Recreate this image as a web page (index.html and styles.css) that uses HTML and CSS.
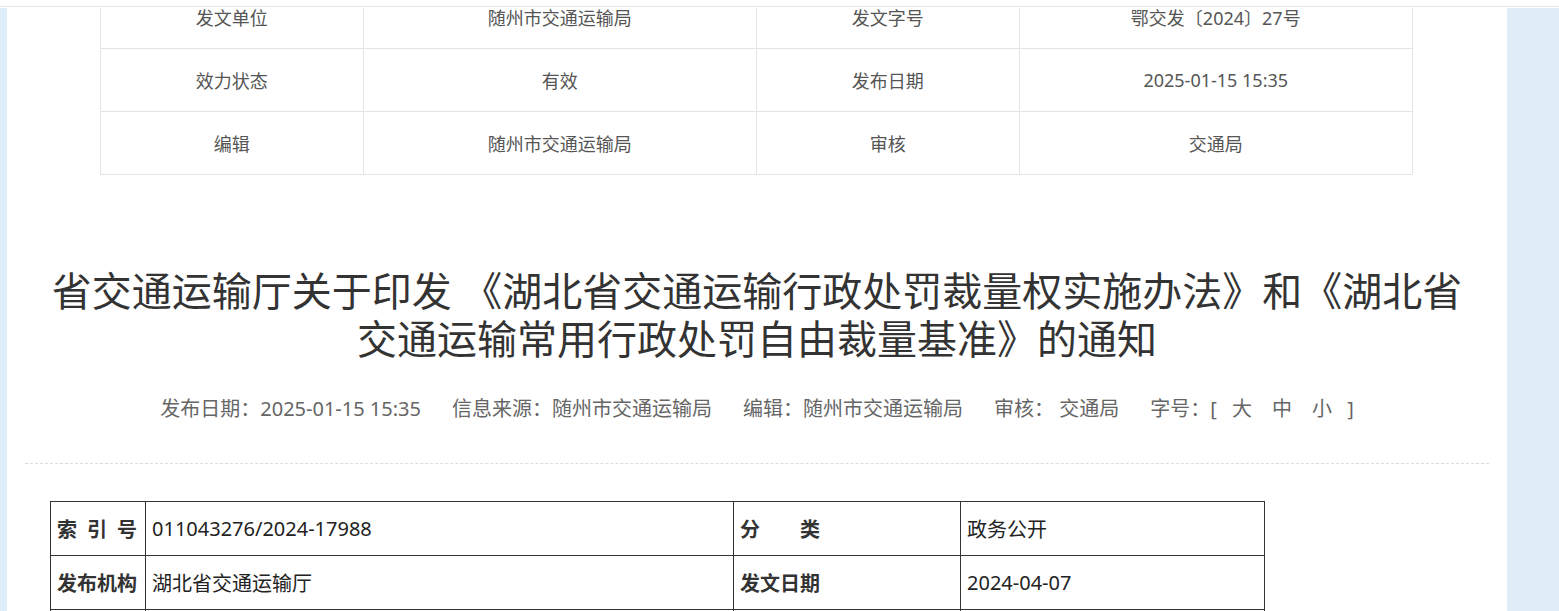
FILE: index.html
```html
<!DOCTYPE html>
<html>
<head>
    <meta charset="utf-8">
    <title>省交通运输厅关于印发《湖北省交通运输行政处罚裁量权实施办法》的通知</title>
    <link rel="stylesheet" href="styles.css">
</head>
<body>
    <div class="topbar"></div>
    <div class="page">
        <div class="main">
            <div class="frame">
                <table class="info-table">
                    <tr>
                        <td class="w1">发文单位</td>
                        <td class="w2">随州市交通运输局</td>
                        <td class="w1">发文字号</td>
                        <td class="w2">鄂交发〔2024〕27号</td>
                    </tr>
                    <tr>
                        <td>效力状态</td>
                        <td>有效</td>
                        <td>发布日期</td>
                        <td>2025-01-15 15:35</td>
                    </tr>
                    <tr>
                        <td>编辑</td>
                        <td>随州市交通运输局</td>
                        <td>审核</td>
                        <td>交通局</td>
                    </tr>
                </table>
            </div>

            <div class="article">
                <h1 class="title">省交通运输厅关于印发 《湖北省交通运输行政处罚裁量权实施办法》和《湖北省交通运输常用行政处罚自由裁量基准》的通知</h1>
                <div class="meta">
                    <span>发布日期：2025-01-15 15:35</span>
                    <span>信息来源：随州市交通运输局</span>
                    <span>编辑：随州市交通运输局</span>
                    <span>审核：&nbsp;交通局</span>
                    <span>字号：[ <a href="#">大</a><a href="#">中</a><a href="#">小</a> ]</span>
                </div>

                <div class="content">
                    <table class="doc-table">
                        <colgroup>
                            <col style="width: 95px">
                            <col style="width: 588px">
                            <col style="width: 227px">
                            <col style="width: 304px">
                        </colgroup>
                        <tr>
                            <th>索&ensp;引&ensp;号</th>
                            <td>011043276/2024-17988</td>
                            <th>分&emsp;&emsp;类</th>
                            <td>政务公开</td>
                        </tr>
                        <tr>
                            <th>发布机构</th>
                            <td>湖北省交通运输厅</td>
                            <th>发文日期</th>
                            <td>2024-04-07</td>
                        </tr>
                        <tr>
                            <th>名&emsp;&emsp;称</th>
                            <td>省交通运输厅关于印发《湖北省交通运输行政处罚裁量权实施办法》的通知</td>
                            <th>文&emsp;&emsp;号</th>
                            <td>鄂交发〔2024〕27号</td>
                        </tr>
                    </table>
                </div>
            </div>
        </div>
    </div>
</body>
</html>
```

FILE: styles.css
```css
html, body {
    margin: 0;
    padding: 0;
    background: #fff;
    overflow: hidden;
}
body {
    font-family: "Microsoft YaHei", "Noto Sans", "Noto Sans CJK SC", sans-serif;
    color: #555;
}
.topbar {
    height: 6px;
    border-bottom: 1px solid #e6e6e6;
    margin-bottom: 1px;
}
.page {
    display: flex;
    background: #deedf7;
    padding: 0 52px 0 7px;
    min-height: 700px;
}
.main {
    width: 1500px;
    background: #fff;
}
.frame {
    overflow: hidden;
}
.info-table {
    width: 1313px;
    margin: -23px 0 0 93px;
    border-collapse: collapse;
    font-size: 18px;
    color: #555;
}
.info-table td {
    border: 1px solid #e4e4e4;
    height: 62px;
    padding: 0;
    text-align: center;
}
.info-table .w1 {
    width: 262px;
}
.info-table .w2 {
    width: 393px;
}
.article {
    padding: 0 18px;
}
.title {
    margin: 92px 0 0;
    padding: 0 22px;
    font-size: 40px;
    line-height: 48px;
    font-weight: normal;
    color: #333;
    text-align: center;
}
.meta {
    margin-top: 30px;
    padding-bottom: 38px;
    border-bottom: 1px dashed #dcdcdc;
    display: flex;
    justify-content: center;
    gap: 31px;
    font-size: 20px;
    line-height: 32px;
    color: #666;
}
.meta a {
    color: #666;
    text-decoration: none;
    margin: 0 10px;
}
.content {
    padding: 37px 0 0 25px;
}
.doc-table {
    width: 1214px;
    border-collapse: collapse;
    table-layout: fixed;
    font-size: 20px;
    color: #222;
}
.doc-table th,
.doc-table td {
    border: 1px solid #333;
    height: 53px;
    padding: 0 6px;
    text-align: left;
    white-space: nowrap;
    overflow: hidden;
}
.doc-table th {
    font-weight: bold;
    color: #333;
}
```
